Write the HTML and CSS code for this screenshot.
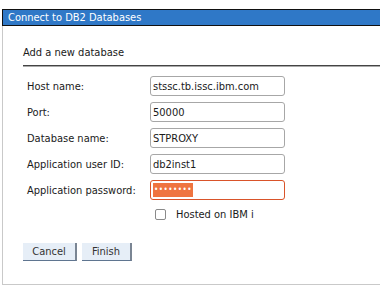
FILE: index.html
```html
<!DOCTYPE html>
<html lang="en">
<head>
    <meta charset="UTF-8">
    <meta name="viewport" content="width=device-width, initial-scale=1.0">
    <title>Connect to DB2 Databases</title>
    <link rel="stylesheet" href="styles.css">
</head>
<body>
    <div class="window">
        <div class="titlebar">Connect to DB2 Databases</div>
        <div class="content">
            <h2>Add a new database</h2>
            <form class="db-form">
                <label for="host">Host name:</label>
                <input type="text" id="host" value="stssc.tb.issc.ibm.com">

                <label for="port">Port:</label>
                <input type="text" id="port" value="50000">

                <label for="dbname">Database name:</label>
                <input type="text" id="dbname" value="STPROXY">

                <label for="user">Application user ID:</label>
                <input type="text" id="user" value="db2inst1">

                <label>Application password:</label>
                <div class="field focused"><span class="masked">&bull;&bull;&bull;&bull;&bull;&bull;&bull;&bull;</span></div>

                <div class="check-row">
                    <span class="checkbox"></span>
                    <span>Hosted on IBM i</span>
                </div>
            </form>

            <div class="buttons">
                <button type="button" class="cancel">Cancel</button>
                <button type="button" class="finish">Finish</button>
            </div>
        </div>
    </div>
</body>
</html>
```

FILE: styles.css
```css
* {
    margin: 0;
    padding: 0;
    box-sizing: border-box;
}

body {
    background: white;
    font-family: "DejaVu Sans Condensed", "DejaVu Sans", Verdana, sans-serif;
    font-size: 11px;
    color: #1a1a1a;
    padding: 9px 0 0 2px;
}

.titlebar {
    background: #2f78c7;
    color: white;
    border: 1px solid #111;
    border-right: none;
    height: 17px;
    line-height: 15px;
    padding-left: 5px;
    font-size: 11px;
}

.content {
    border-left: 1px solid #c9c9c9;
    border-bottom: 1px solid #c9c9c9;
    height: 259px;
    padding: 19px 0 0 20px;
}

h2 {
    font-size: 11px;
    font-weight: normal;
    line-height: 15px;
    padding-bottom: 5px;
    border-bottom: 1px solid #444;
    box-shadow: 0 1px 0 #aaa;
}

.db-form {
    display: grid;
    grid-template-columns: 123px 135px;
    row-gap: 6px;
    margin: 10px 0 0 4px;
    align-items: center;
}

input, .field {
    height: 20px;
    width: 135px;
    border: 1px solid #a7a7a7;
    border-radius: 3px;
    padding: 0 2px;
    font-family: inherit;
    font-size: 11px;
    color: #1a1a1a;
    background: white;
    outline: none;
}

.field {
    display: flex;
    align-items: center;
}

.field.focused {
    border-color: #d9542a;
}

.masked {
    background: #ef7440;
    color: white;
    font-size: 8px;
    line-height: 14px;
    letter-spacing: 0.5px;
    padding: 0 1px;
}

.check-row {
    grid-column: 2;
    display: flex;
    align-items: center;
    gap: 10px;
    margin: 2px 0 0 5px;
}

.checkbox {
    width: 11px;
    height: 11px;
    border: 1px solid #8a8a8a;
    border-radius: 2px;
    background: white;
}

.buttons {
    display: flex;
    gap: 5px;
    margin-top: 22px;
}

button {
    height: 18px;
    background: #e6eef7;
    color: #333;
    font-family: inherit;
    font-size: 11px;
    border: none;
    border-right: 2px solid #7a8593;
    border-bottom: 1px solid #5f7590;
    cursor: pointer;
}

.cancel {
    width: 54px;
}

.finish {
    width: 50px;
}
```
